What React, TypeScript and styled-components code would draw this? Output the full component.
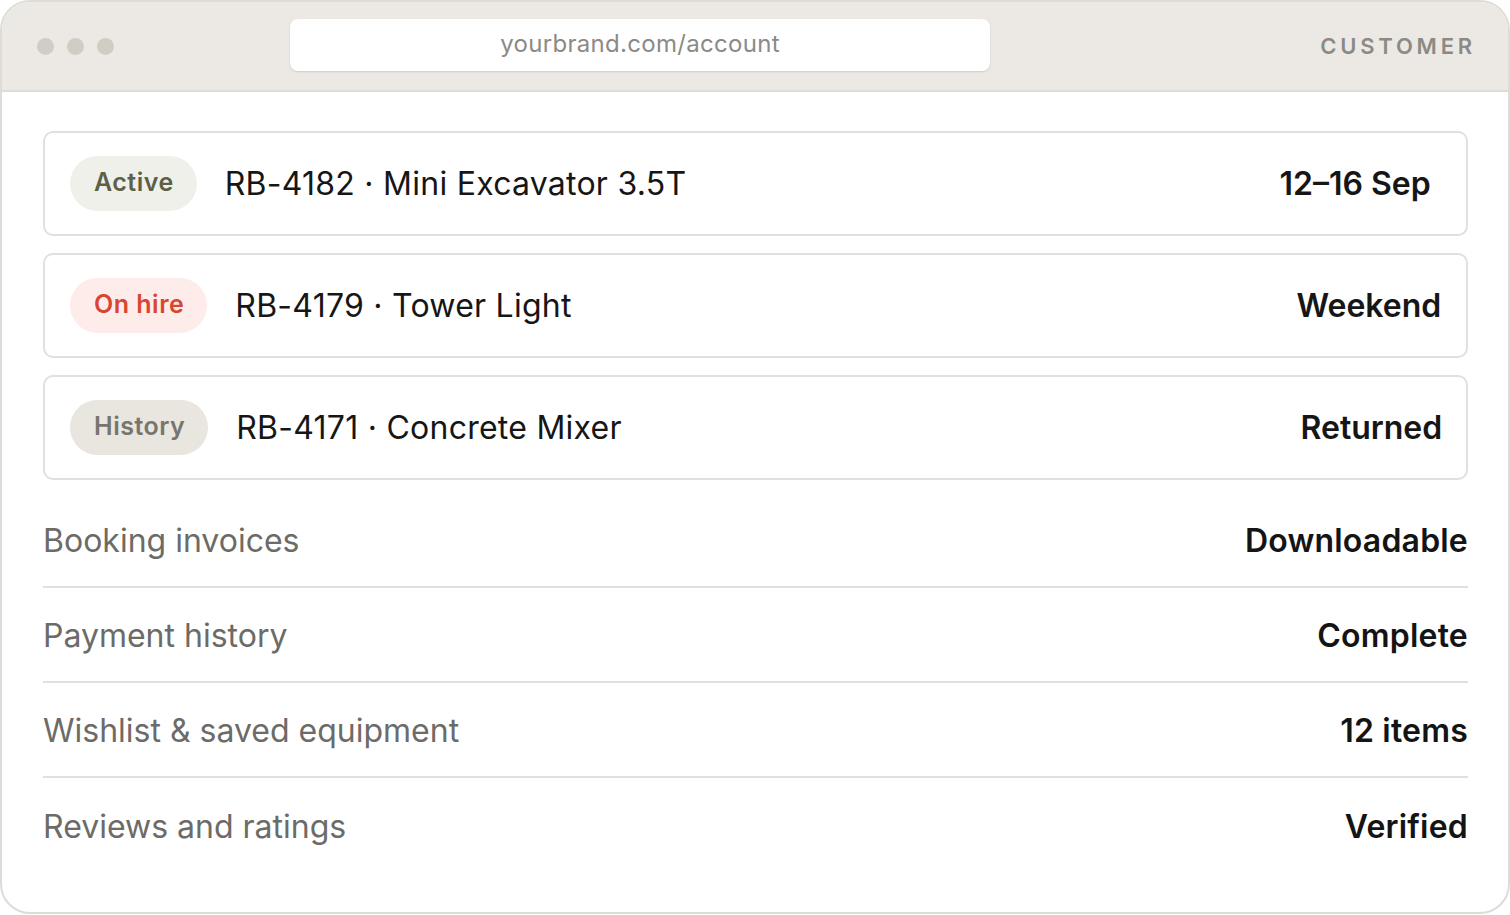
import React from "react";
import styled, { createGlobalStyle } from "styled-components";

const GlobalStyle = createGlobalStyle`
    html, body {
        margin: 0;
        padding: 0;
        background: #ffffff;
    }
    body {
        font-family: Inter, "Noto Sans", sans-serif;
        -webkit-font-smoothing: antialiased;
    }
`;

const Window = styled.div`
    box-sizing: border-box;
    width: 1510px;
    height: 914px;
    border: 2px solid #dedcd6;
    border-radius: 30px;
    overflow: hidden;
    background: #ffffff;
    display: flex;
    flex-direction: column;
`;

const TopBar = styled.header`
    box-sizing: border-box;
    height: 90px;
    flex-shrink: 0;
    background: #ece9e4;
    border-bottom: 2px solid #dedcd6;
    display: flex;
    align-items: center;
    padding: 0 33px 0 35px;
`;

const Dots = styled.div`
    display: flex;
    gap: 13px;
    width: 253px;
`;

const Dot = styled.span`
    width: 17px;
    height: 17px;
    border-radius: 50%;
    background: #d0cdc5;
`;

const UrlBar = styled.div`
    box-sizing: border-box;
    width: 700px;
    height: 52px;
    margin-top: -2px;
    background: #ffffff;
    border-radius: 8px;
    box-shadow: 0 1px 2px rgba(0, 0, 0, 0.12);
    display: flex;
    align-items: center;
    justify-content: center;
    font-size: 24px;
    letter-spacing: 0.3px;
    color: #8b8a86;
    padding-bottom: 4px;
`;

const Role = styled.div`
    margin-left: auto;
    font-size: 22px;
    font-weight: 600;
    letter-spacing: 3.8px;
    color: #8b8a85;
    margin-top: 0;
    margin-right: -1px;
`;

const Body = styled.main`
    padding: 39px 40px 0 41px;
    display: flex;
    flex-direction: column;
`;

const Cards = styled.div`
    display: flex;
    flex-direction: column;
    gap: 17px;
`;

const Card = styled.div`
    box-sizing: border-box;
    height: 105px;
    border: 2px solid #e2e0db;
    border-radius: 10px;
    display: flex;
    align-items: center;
    padding-left: 25px;
    overflow: hidden;
`;

type Tone = "active" | "hire" | "history";

const tones: Record<Tone, { bg: string; fg: string }> = {
    active: { bg: "#f0f0ea", fg: "#5c5f49" },
    hire: { bg: "#fdecea", fg: "#d9462f" },
    history: { bg: "#e8e6df", fg: "#77756e" },
};

const Badge = styled.span<{ $tone: Tone }>`
    box-sizing: border-box;
    height: 55px;
    padding: 0 23px 4px 24px;
    border-radius: 28px;
    display: inline-flex;
    align-items: center;
    flex-shrink: 0;
    font-size: 25px;
    font-weight: 600;
    letter-spacing: 0.5px;
    background: ${(p) => tones[p.$tone].bg};
    color: ${(p) => tones[p.$tone].fg};
`;

const CardRow = styled.div`
    flex-shrink: 0;
    width: 1206px;
    margin-left: 28px;
    display: flex;
    align-items: center;
    justify-content: space-between;
    font-size: 32px;
    color: #161616;
`;

const Equipment = styled.span`
    font-weight: 400;
    letter-spacing: 0.25px;
`;

const When = styled.span`
    font-weight: 600;
`;

const List = styled.div`
    margin-top: 13px;
    display: flex;
    flex-direction: column;
`;

const ListRow = styled.div<{ $last?: boolean }>`
    box-sizing: border-box;
    height: 95px;
    display: flex;
    align-items: center;
    justify-content: space-between;
    border-bottom: ${(p) => (p.$last ? "none" : "2px solid #e2e0db")};
    font-size: 32px;
    padding-top: 1px;
`;

const Label = styled.span`
    color: #6c6b67;
    font-weight: 400;
`;

const Value = styled.span`
    color: #141414;
    font-weight: 600;
    letter-spacing: 0.2px;
`;

const rentals: { tone: Tone; badge: string; name: string; when: string }[] = [
    { tone: "active", badge: "Active", name: "RB-4182 · Mini Excavator 3.5T", when: "12–16 Sep" },
    { tone: "hire", badge: "On hire", name: "RB-4179 · Tower Light", when: "Weekend" },
    { tone: "history", badge: "History", name: "RB-4171 · Concrete Mixer", when: "Returned" },
];

const details = [
    { label: "Booking invoices", value: "Downloadable" },
    { label: "Payment history", value: "Complete" },
    { label: "Wishlist & saved equipment", value: "12 items" },
    { label: "Reviews and ratings", value: "Verified" },
];

function App() {
    return (
        <>
            <GlobalStyle />
            <Window>
                <TopBar>
                    <Dots>
                        <Dot />
                        <Dot />
                        <Dot />
                    </Dots>
                    <UrlBar>yourbrand.com/account</UrlBar>
                    <Role>CUSTOMER</Role>
                </TopBar>
                <Body>
                    <Cards>
                        {rentals.map((r) => (
                            <Card key={r.name}>
                                <Badge $tone={r.tone}>{r.badge}</Badge>
                                <CardRow>
                                    <Equipment>{r.name}</Equipment>
                                    <When>{r.when}</When>
                                </CardRow>
                            </Card>
                        ))}
                    </Cards>
                    <List>
                        {details.map((d, i) => (
                            <ListRow key={d.label} $last={i === details.length - 1}>
                                <Label>{d.label}</Label>
                                <Value>{d.value}</Value>
                            </ListRow>
                        ))}
                    </List>
                </Body>
            </Window>
        </>
    );
}

export default App;
